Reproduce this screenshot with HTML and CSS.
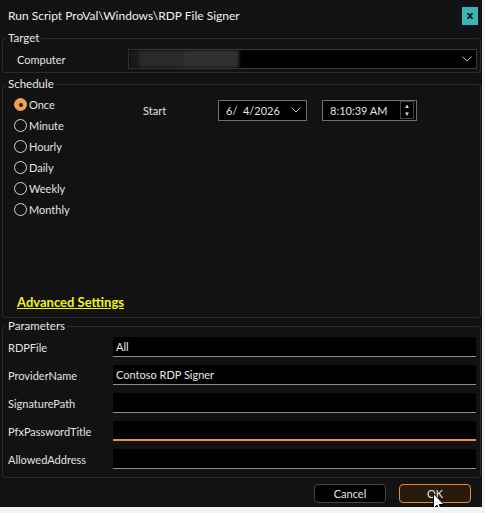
FILE: index.html
```html
<!DOCTYPE html>
<html>
<head>
  <meta name="viewport" content="width=device-width, initial-scale=1.0">
  <link rel="stylesheet" href="styles.css">
</head>
<body>
  <div class="ventana">
    <!-- BARRA DE TITULO -->
    <div class="titulo">
      <span>Run Script ProVal\Windows\RDP File Signer</span>
      <button class="cerrar">x</button>
    </div>

    <!-- TARGET -->
    <fieldset class="grupo grupo-target">
      <legend>Target</legend>
      <div class="fila-target">
        <label>Computer</label>
        <div class="combo">
          <div class="borroso">
            <span class="b1"></span><span class="b2"></span><span class="b3"></span>
          </div>
          <svg class="chevron" width="10" height="6" viewBox="0 0 10 6"><path d="M0.5 0.5 L5 5 L9.5 0.5" fill="none" stroke="#bbb" stroke-width="1"/></svg>
        </div>
      </div>
    </fieldset>

    <!-- SCHEDULE -->
    <fieldset class="grupo grupo-schedule">
      <legend>Schedule</legend>
      <div class="schedule-cuerpo">
        <div class="schedule">
          <div class="radios">
            <label class="radio activo"><span class="circulo"></span>Once</label>
            <label class="radio"><span class="circulo"></span>Minute</label>
            <label class="radio"><span class="circulo"></span>Hourly</label>
            <label class="radio"><span class="circulo"></span>Daily</label>
            <label class="radio"><span class="circulo"></span>Weekly</label>
            <label class="radio"><span class="circulo"></span>Monthly</label>
          </div>
          <div class="inicio">
            <span class="inicio-label">Start</span>
            <div class="fecha">
              <span>6/&nbsp; 4/2026</span>
              <svg width="10" height="6" viewBox="0 0 10 6"><path d="M0.5 0.5 L5 5 L9.5 0.5" fill="none" stroke="#bbb" stroke-width="1"/></svg>
            </div>
            <div class="hora">
              <span>8:10:39 AM</span>
              <div class="spin">
                <span>&#9650;</span>
                <span>&#9660;</span>
              </div>
            </div>
          </div>
        </div>
        <a class="avanzado" href="#">Advanced Settings</a>
      </div>
    </fieldset>

    <!-- PARAMETERS -->
    <fieldset class="grupo grupo-params">
      <legend>Parameters</legend>
      <div class="params">
        <label>RDPFile</label>
        <input type="text" value="All">
        <label>ProviderName</label>
        <input type="text" value="Contoso RDP Signer">
        <label>SignaturePath</label>
        <input type="text" value="">
        <label>PfxPasswordTitle</label>
        <input type="text" value="" class="foco">
        <label>AllowedAddress</label>
        <input type="text" value="">
      </div>
    </fieldset>

    <!-- BOTONES -->
    <div class="pie">
      <button class="btn">Cancel</button>
      <button class="btn btn-ok">OK</button>
    </div>

    <svg class="cursor" width="13" height="20" viewBox="0 0 13 20">
      <path d="M0.5 0.5 L0.5 15.5 L4 12.2 L6.6 18.5 L8.8 17.6 L6.3 11.5 L11 11.5 Z" fill="#fff" stroke="#000" stroke-width="1" stroke-linejoin="miter"/>
    </svg>
  </div>
</body>
</html>
```

FILE: styles.css
```css
/* GENERAL */
body {
  margin: 0;
  background: #f3f3f3;
  font-family: "Lato", "Noto Sans", sans-serif;
  font-size: 11px;
  color: #e2e2e2;
}

.ventana {
  position: relative;
  width: 482px;
  height: 507px;
  background: #121212;
  display: flex;
  flex-direction: column;
  box-sizing: border-box;
}

/* TITULO */
.titulo {
  height: 30px;
  flex: none;
  display: flex;
  align-items: center;
  justify-content: space-between;
  padding: 0 4px 0 8px;
  font-size: 12px;
  color: #f0f0f0;
}

.cerrar {
  width: 16px;
  height: 18px;
  margin-top: 2px;
  border: none;
  padding: 0;
  background: #3eb3b3;
  color: #0d1b2a;
  font-weight: bold;
  font-size: 11px;
  font-family: "DejaVu Sans", sans-serif;
  line-height: 16px;
}

/* GRUPOS */
.grupo {
  flex: none;
  margin: 0 1px 0 2px;
  padding: 0;
  border: 1px solid #2b2b2b;
  border-radius: 3px;
  min-width: 0;
}

.grupo legend {
  padding: 0 2px;
  margin-left: 3px;
  line-height: 16px;
  font-size: 11.5px;
  color: #e8e8e8;
}

.grupo-target {
  height: 43px;
  box-sizing: border-box;
}

.fila-target {
  display: flex;
  align-items: center;
  padding: 3px 3px 0 14px;
}

.fila-target label {
  width: 111px;
}

.combo {
  flex: 1;
  height: 20px;
  background: #000;
  border: 1px solid #3a3a3a;
  box-sizing: border-box;
  display: flex;
  align-items: center;
  justify-content: space-between;
  padding-right: 4px;
}

.borroso {
  display: flex;
  height: 18px;
  filter: blur(1.5px);
}

.borroso span { display: block; height: 100%; }
.borroso .b1 { width: 10px; background: #1a1a1a; }
.borroso .b2 { width: 45px; background: #2a2a2a; }
.borroso .b3 { width: 55px; background: #303030; }

/* SCHEDULE */
.grupo-schedule {
  margin-top: 3px;
  height: 242px;
  box-sizing: border-box;
}

.schedule-cuerpo {
  height: 224px;
  display: flex;
  flex-direction: column;
}

.schedule {
  display: flex;
  padding: 2px 0 0 11px;
}

.radios {
  display: flex;
  flex-direction: column;
  width: 129px;
}

.radio {
  display: flex;
  align-items: center;
  height: 21px;
  gap: 2px;
}

.circulo {
  width: 11px;
  height: 11px;
  border: 1px solid #d8d8d8;
  border-radius: 50%;
  box-sizing: content-box;
  position: relative;
}

.radio.activo .circulo {
  background: #f5a04a;
  border-color: #f5a04a;
}

.radio.activo .circulo::after {
  content: '';
  position: absolute;
  left: 4px;
  top: 4px;
  width: 4px;
  height: 4px;
  border-radius: 50%;
  background: #1a1a1a;
}

.inicio {
  display: flex;
  align-items: center;
  height: 22px;
  margin-top: 5px;
}

.inicio-label {
  width: 75px;
}

.fecha, .hora {
  height: 21px;
  background: #000;
  border: 1px solid #6e6e6e;
  box-sizing: border-box;
  display: flex;
  align-items: center;
  justify-content: space-between;
  padding: 0 5px 0 7px;
}

.fecha {
  width: 89px;
  margin-right: 15px;
}

.hora {
  width: 95px;
  padding-right: 2px;
}

.spin {
  display: flex;
  flex-direction: column;
  border: 1px solid #444;
  width: 12px;
  align-items: center;
  font-size: 6px;
  line-height: 8px;
  color: #ddd;
}

.avanzado {
  margin: auto 0 6px 14px;
  color: #f4f418;
  font-weight: bold;
  font-size: 13px;
}

/* PARAMETERS */
.grupo-params {
  height: 160px;
  box-sizing: border-box;
}

.params {
  display: grid;
  grid-template-columns: 105px 1fr;
  row-gap: 8px;
  align-items: center;
  padding: 3px 4px 0 5px;
}

.params input {
  height: 20px;
  box-sizing: border-box;
  background: #000;
  border: none;
  border-bottom: 1px solid #8c8c8c;
  color: #e8e8e8;
  font-family: inherit;
  font-size: 11px;
  padding: 0 3px;
  outline: none;
}

.params input.foco {
  border-bottom: 2px solid #f0913a;
}

/* PIE */
.pie {
  flex: 1;
  display: flex;
  justify-content: flex-end;
  align-items: center;
  gap: 13px;
  padding: 2px 11px 0 0;
}

.btn {
  width: 72px;
  height: 19px;
  border-radius: 4px;
  border: 1px solid #444;
  background: #000;
  color: #e6e6e6;
  font-family: inherit;
  font-size: 11px;
  padding: 0;
}

.btn-ok {
  background: #2a1a0c;
  border-color: #e08a3c;
}

.cursor {
  position: absolute;
  left: 433px;
  top: 493px;
}
```
